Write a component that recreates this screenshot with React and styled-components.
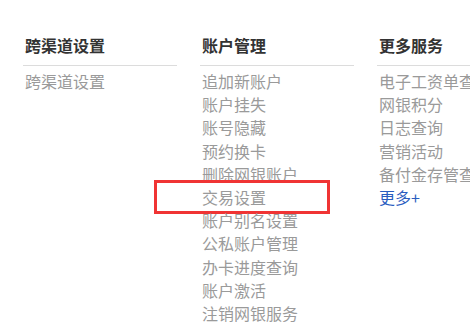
import React from 'react';
import styled, { createGlobalStyle } from 'styled-components';

const GlobalStyle = createGlobalStyle`
  html, body {
    margin: 0;
    padding: 0;
    background: #fff;
    overflow: hidden;
  }
  body {
    font-family: "Noto Sans CJK SC", "Noto Sans", sans-serif;
  }
`;

const Menu = styled.div`
  display: flex;
  gap: 23px;
  padding: 33px 0 0 23px;
  width: 700px;
`;

const Column = styled.div`
  width: 154px;
  flex-shrink: 0;
`;

const Title = styled.h3`
  margin: 0;
  padding: 0 0 8px 2px;
  font-size: 16px;
  line-height: 24px;
  font-weight: 700;
  color: #333;
  border-bottom: 1px solid #dcdcdc;
`;

const List = styled.ul`
  list-style: none;
  margin: 0;
  padding: 4px 0 0 2px;
`;

const Item = styled.li`
  position: relative;
  font-size: 16px;
  line-height: 23.2px;
  color: ${props => (props.$more ? '#2a5cbf' : '#9a9a9a')};
  white-space: nowrap;
`;

const Highlight = styled.span`
  position: absolute;
  left: -48px;
  top: -6px;
  width: 176px;
  height: 34px;
  box-sizing: border-box;
  border: 3px solid #f03434;
  pointer-events: none;
`;

const columns = [
  {
    title: '跨渠道设置',
    items: ['跨渠道设置'],
  },
  {
    title: '账户管理',
    items: [
      '追加新账户',
      '账户挂失',
      '账号隐藏',
      '预约换卡',
      '删除网银账户',
      '交易设置',
      '账户别名设置',
      '公私账户管理',
      '办卡进度查询',
      '账户激活',
      '注销网银服务',
    ],
    marked: '交易设置',
  },
  {
    title: '更多服务',
    items: ['电子工资单查询', '网银积分', '日志查询', '营销活动', '备付金存管查询'],
    more: true,
  },
];

const App = () => (
  <>
    <GlobalStyle />
    <Menu>
      {columns.map(col => (
        <Column key={col.title}>
          <Title>{col.title}</Title>
          <List>
            {col.items.map(item => (
              <Item key={item}>
                {item}
                {col.marked === item && <Highlight />}
              </Item>
            ))}
            {col.more && <Item $more>更多+</Item>}
          </List>
        </Column>
      ))}
    </Menu>
  </>
);

export default App;
